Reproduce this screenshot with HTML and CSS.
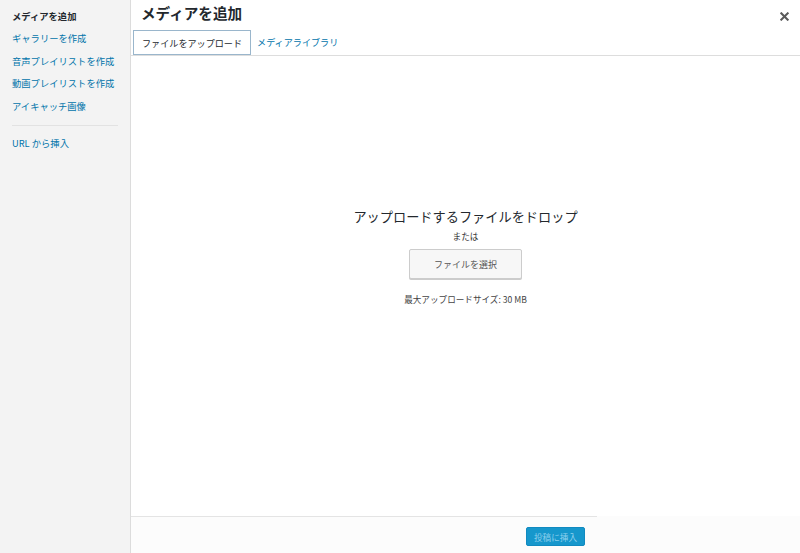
FILE: index.html
```html
<!DOCTYPE html>
<html lang="ja">
<head>
<meta charset="utf-8">
<link rel="stylesheet" href="styles.css">
</head>
<body>
<aside class="sidebar">
  <div class="menu-item active">メディアを追加</div>
  <a class="menu-item">ギャラリーを作成</a>
  <a class="menu-item">音声プレイリストを作成</a>
  <a class="menu-item">動画プレイリストを作成</a>
  <a class="menu-item">アイキャッチ画像</a>
  <div class="separator"></div>
  <a class="menu-item">URL から挿入</a>
</aside>
<main class="frame">
  <header class="frame-title">
    <h1>メディアを追加</h1>
    <button class="close" aria-label="閉じる">
      <svg width="9" height="9" viewBox="0 0 9 9"><path d="M1.3 1.3 L7.7 7.7 M7.7 1.3 L1.3 7.7" stroke="#5a5a5a" stroke-width="2" stroke-linecap="square"/></svg>
    </button>
  </header>
  <nav class="tabs">
    <span class="tab active">ファイルをアップロード</span>
    <a class="tab">メディアライブラリ</a>
  </nav>
  <section class="content">
    <div class="uploader">
      <p class="drop">アップロードするファイルをドロップ</p>
      <p class="or">または</p>
      <button class="select">ファイルを選択</button>
      <p class="max">最大アップロードサイズ: 30 MB</p>
    </div>
  </section>
  <footer class="footer">
    <div class="toolbar">
      <button class="insert">投稿に挿入</button>
    </div>
  </footer>
</main>
</body>
</html>
```
FILE: styles.css
```css
* { box-sizing: border-box; }
html, body { margin: 0; padding: 0; }
body {
  width: 800px;
  height: 553px;
  display: flex;
  font-family: "Noto Sans CJK JP", "Liberation Sans", sans-serif;
  background: #fff;
  color: #23282d;
  overflow: hidden;
}
.sidebar {
  width: 131px;
  flex: none;
  background: #f3f3f3;
  border-right: 1px solid #dcdcdc;
  padding: 8px 0 0 12px;
  display: flex;
  flex-direction: column;
}
.menu-item {
  display: block;
  font-size: 9.3px;
  line-height: 16px;
  height: 22.4px;
  color: #0073aa;
  text-decoration: none;
  white-space: nowrap;
}
.menu-item.active {
  color: #23282d;
  font-weight: 700;
}
.separator {
  width: 106px;
  height: 1px;
  background: #e2e2e2;
  margin: 5px 0 9px;
}
.frame {
  flex: 1;
  display: flex;
  flex-direction: column;
  min-width: 0;
}
.frame-title {
  height: 30px;
  display: flex;
  align-items: center;
  justify-content: space-between;
  padding: 0 11px 0 10px;
}
.frame-title h1 {
  margin: 0;
  font-size: 14.6px;
  font-weight: 700;
  line-height: 20px;
  margin-top: -4px;
  color: #23282d;
}
.close {
  border: 0;
  background: none;
  padding: 0;
  width: 9px;
  height: 9px;
  display: flex;
  margin-top: 2px;
}
.tabs {
  height: 26px;
  display: flex;
  align-items: stretch;
  padding-left: 2px;
  border-bottom: 1px solid #dddddd;
}
.tab {
  font-size: 9.1px;
  line-height: 24px;
  padding: 0 6px;
  color: #0073aa;
  text-decoration: none;
  white-space: nowrap;
}
.tab.active {
  color: #23282d;
  border: 1px solid #9ab6cc;
  padding: 0 8px;
  height: 25px;
  background: #fff;
}
.content {
  flex: 1;
  display: flex;
  justify-content: center;
}
.uploader {
  display: flex;
  flex-direction: column;
  align-items: center;
  padding-top: 151px;
}
.uploader p { margin: 0; }
.drop {
  font-size: 13.2px;
  line-height: 20px;
  color: #23282d;
}
.or {
  font-size: 8.7px;
  line-height: 12px;
  margin-top: 4px !important;
  font-weight: 400;
  color: #333;
}
.select {
  margin-top: 6px;
  width: 113px;
  height: 30px;
  font-family: inherit;
  font-size: 9px;
  color: #555;
  background: #f7f7f7;
  border: 1px solid #cccccc;
  border-radius: 2px;
  box-shadow: 0 1px 0 #ccc;
  padding: 0;
}
.max {
  margin-top: 14px !important;
  font-size: 8.6px;
  line-height: 12px;
  color: #444;
}
.footer {
  height: 37px;
  background: #fcfcfc;
  display: flex;
}
.toolbar {
  width: 466px;
  border-top: 1px solid #e4e4e4;
  display: flex;
  justify-content: flex-end;
  padding: 10px 12px 0 0;
}
.insert {
  width: 59px;
  height: 19px;
  padding: 0;
  font-family: inherit;
  font-size: 8.6px;
  color: #8fd0ec;
  background: #1697cc;
  border: 1px solid #118ac0;
  border-radius: 2px;
}
```
